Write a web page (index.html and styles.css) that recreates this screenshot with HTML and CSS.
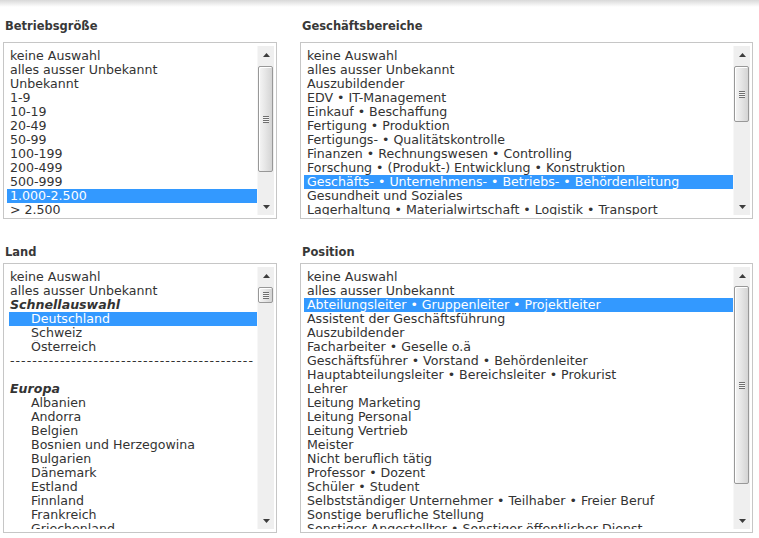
FILE: index.html
```html
<!DOCTYPE html>
<html lang="de">
<head>
<meta charset="utf-8">
<title>Filter</title>
<link rel="stylesheet" href="styles.css">
</head>
<body>
<div class="page">

  <section class="field">
    <h2 class="label">Betriebsgröße</h2>
    <div class="listbox lb-short" role="listbox">
      <ul class="options">
        <li>keine Auswahl</li>
        <li>alles ausser Unbekannt</li>
        <li>Unbekannt</li>
        <li>1-9</li>
        <li>10-19</li>
        <li>20-49</li>
        <li>50-99</li>
        <li>100-199</li>
        <li>200-499</li>
        <li>500-999</li>
        <li class="sel">1.000-2.500</li>
        <li>&gt; 2.500</li>
      </ul>
      <div class="scrollbar">
        <div class="sb-btn"><svg width="7" height="4" viewBox="0 0 7 4"><polygon points="0,4 7,4 3.5,0" fill="#3c3c3c"/></svg></div>
        <div class="sb-track"><div class="sb-thumb" style="margin-top:3px;height:106px"><span class="grip"></span></div></div>
        <div class="sb-btn"><svg width="7" height="4" viewBox="0 0 7 4"><polygon points="0,0 7,0 3.5,4" fill="#3c3c3c"/></svg></div>
      </div>
    </div>
  </section>

  <section class="field">
    <h2 class="label">Geschäftsbereiche</h2>
    <div class="listbox lb-short" role="listbox">
      <ul class="options">
        <li>keine Auswahl</li>
        <li>alles ausser Unbekannt</li>
        <li>Auszubildender</li>
        <li>EDV • IT-Management</li>
        <li>Einkauf • Beschaffung</li>
        <li>Fertigung • Produktion</li>
        <li>Fertigungs- • Qualitätskontrolle</li>
        <li>Finanzen • Rechnungswesen • Controlling</li>
        <li>Forschung • (Produkt-) Entwicklung • Konstruktion</li>
        <li class="sel">Geschäfts- • Unternehmens- • Betriebs- • Behördenleitung</li>
        <li>Gesundheit und Soziales</li>
        <li>Lagerhaltung • Materialwirtschaft • Logistik • Transport</li>
      </ul>
      <div class="scrollbar">
        <div class="sb-btn"><svg width="7" height="4" viewBox="0 0 7 4"><polygon points="0,4 7,4 3.5,0" fill="#3c3c3c"/></svg></div>
        <div class="sb-track"><div class="sb-thumb" style="margin-top:3px;height:56px"><span class="grip"></span></div></div>
        <div class="sb-btn"><svg width="7" height="4" viewBox="0 0 7 4"><polygon points="0,0 7,0 3.5,4" fill="#3c3c3c"/></svg></div>
      </div>
    </div>
  </section>

  <section class="field field-bottom">
    <h2 class="label">Land</h2>
    <div class="listbox lb-tall" role="listbox">
      <ul class="options">
        <li>keine Auswahl</li>
        <li>alles ausser Unbekannt</li>
        <li class="group">Schnellauswahl</li>
        <li class="indent sel sel-group">Deutschland</li>
        <li class="indent">Schweiz</li>
        <li class="indent">Österreich</li>
        <li class="sep">--------------------------------------------</li>
        <li></li>
        <li class="group">Europa</li>
        <li class="indent">Albanien</li>
        <li class="indent">Andorra</li>
        <li class="indent">Belgien</li>
        <li class="indent">Bosnien und Herzegowina</li>
        <li class="indent">Bulgarien</li>
        <li class="indent">Dänemark</li>
        <li class="indent">Estland</li>
        <li class="indent">Finnland</li>
        <li class="indent">Frankreich</li>
        <li class="indent">Griechenland</li>
      </ul>
      <div class="scrollbar">
        <div class="sb-btn"><svg width="7" height="4" viewBox="0 0 7 4"><polygon points="0,4 7,4 3.5,0" fill="#3c3c3c"/></svg></div>
        <div class="sb-track"><div class="sb-thumb" style="margin-top:3px;height:16px"><span class="grip"></span></div></div>
        <div class="sb-btn"><svg width="7" height="4" viewBox="0 0 7 4"><polygon points="0,0 7,0 3.5,4" fill="#3c3c3c"/></svg></div>
      </div>
    </div>
  </section>

  <section class="field field-bottom">
    <h2 class="label">Position</h2>
    <div class="listbox lb-tall" role="listbox">
      <ul class="options">
        <li>keine Auswahl</li>
        <li>alles ausser Unbekannt</li>
        <li class="sel">Abteilungsleiter • Gruppenleiter • Projektleiter</li>
        <li>Assistent der Geschäftsführung</li>
        <li>Auszubildender</li>
        <li>Facharbeiter • Geselle o.ä</li>
        <li>Geschäftsführer • Vorstand • Behördenleiter</li>
        <li>Hauptabteilungsleiter • Bereichsleiter • Prokurist</li>
        <li>Lehrer</li>
        <li>Leitung Marketing</li>
        <li>Leitung Personal</li>
        <li>Leitung Vertrieb</li>
        <li>Meister</li>
        <li>Nicht beruflich tätig</li>
        <li>Professor • Dozent</li>
        <li>Schüler • Student</li>
        <li>Selbstständiger Unternehmer • Teilhaber • Freier Beruf</li>
        <li>Sonstige berufliche Stellung</li>
        <li>Sonstiger Angestellter • Sonstiger öffentlicher Dienst</li>
      </ul>
      <div class="scrollbar">
        <div class="sb-btn"><svg width="7" height="4" viewBox="0 0 7 4"><polygon points="0,4 7,4 3.5,0" fill="#3c3c3c"/></svg></div>
        <div class="sb-track"><div class="sb-thumb" style="margin-top:2px;height:198px"><span class="grip"></span></div></div>
        <div class="sb-btn"><svg width="7" height="4" viewBox="0 0 7 4"><polygon points="0,0 7,0 3.5,4" fill="#3c3c3c"/></svg></div>
      </div>
    </div>
  </section>

</div>
</body>
</html>
```

FILE: styles.css
```css
* {
  box-sizing: border-box;
}

body {
  margin: 0;
  background: linear-gradient(#d9d9d9, #ffffff 7px) no-repeat, #ffffff;
  font-family: "DejaVu Sans", Verdana, sans-serif;
  color: #333333;
}

.page {
  display: grid;
  grid-template-columns: 274px 453px;
  column-gap: 23px;
  padding: 19px 0 0 3px;
}

.field {
  display: flex;
  flex-direction: column;
}

.label {
  margin: 0 0 9px 2px;
  font-size: 11.5px;
  line-height: 14px;
  font-weight: bold;
  color: #383838;
}

.field-bottom {
  margin-top: 26px;
}

.field-bottom .label {
  margin-bottom: 4px;
}

.listbox {
  display: flex;
  border: 1px solid #c6c6c6;
  padding: 3px 2px 3px 3px;
  background: #ffffff;
}

.lb-short {
  height: 177px;
}

.lb-tall {
  height: 270px;
}

.options {
  flex: 1;
  min-width: 0;
  list-style: none;
  margin: 0;
  padding: 3px 0 0;
  overflow: hidden;
  font-size: 12.6px;
  line-height: 14px;
}

.options li {
  height: 14px;
  padding-left: 3px;
  white-space: nowrap;
  overflow: hidden;
}

.options .sel {
  background: #3399ff;
  color: #ffffff;
}

.options .group {
  font-weight: bold;
  font-style: italic;
}

.options .indent {
  padding-left: 24px;
}

.options .sel-group {
  margin-left: 2px;
  padding-left: 22px;
}

.options .sep {
  letter-spacing: 1px;
}

.scrollbar {
  width: 17px;
  display: flex;
  flex-direction: column;
  background: #efefef;
  border-left: 1px solid #f7f7f7;
}

.sb-btn {
  height: 17px;
  flex: none;
  display: flex;
  align-items: center;
  justify-content: center;
}

.sb-track {
  flex: 1;
  display: flex;
  flex-direction: column;
}

.sb-thumb {
  width: 15px;
  border: 1px solid #989898;
  border-radius: 2px;
  background: linear-gradient(to right, #f5f5f5, #e7e7e7 45%, #d4d4d4);
  box-shadow: inset 1px 1px 0 #ffffff;
  display: flex;
  align-items: center;
  justify-content: center;
}

.grip {
  width: 6px;
  height: 7px;
  background: repeating-linear-gradient(to bottom, #6f6f6f 0 1px, #f4f4f4 1px 2px);
}
```
